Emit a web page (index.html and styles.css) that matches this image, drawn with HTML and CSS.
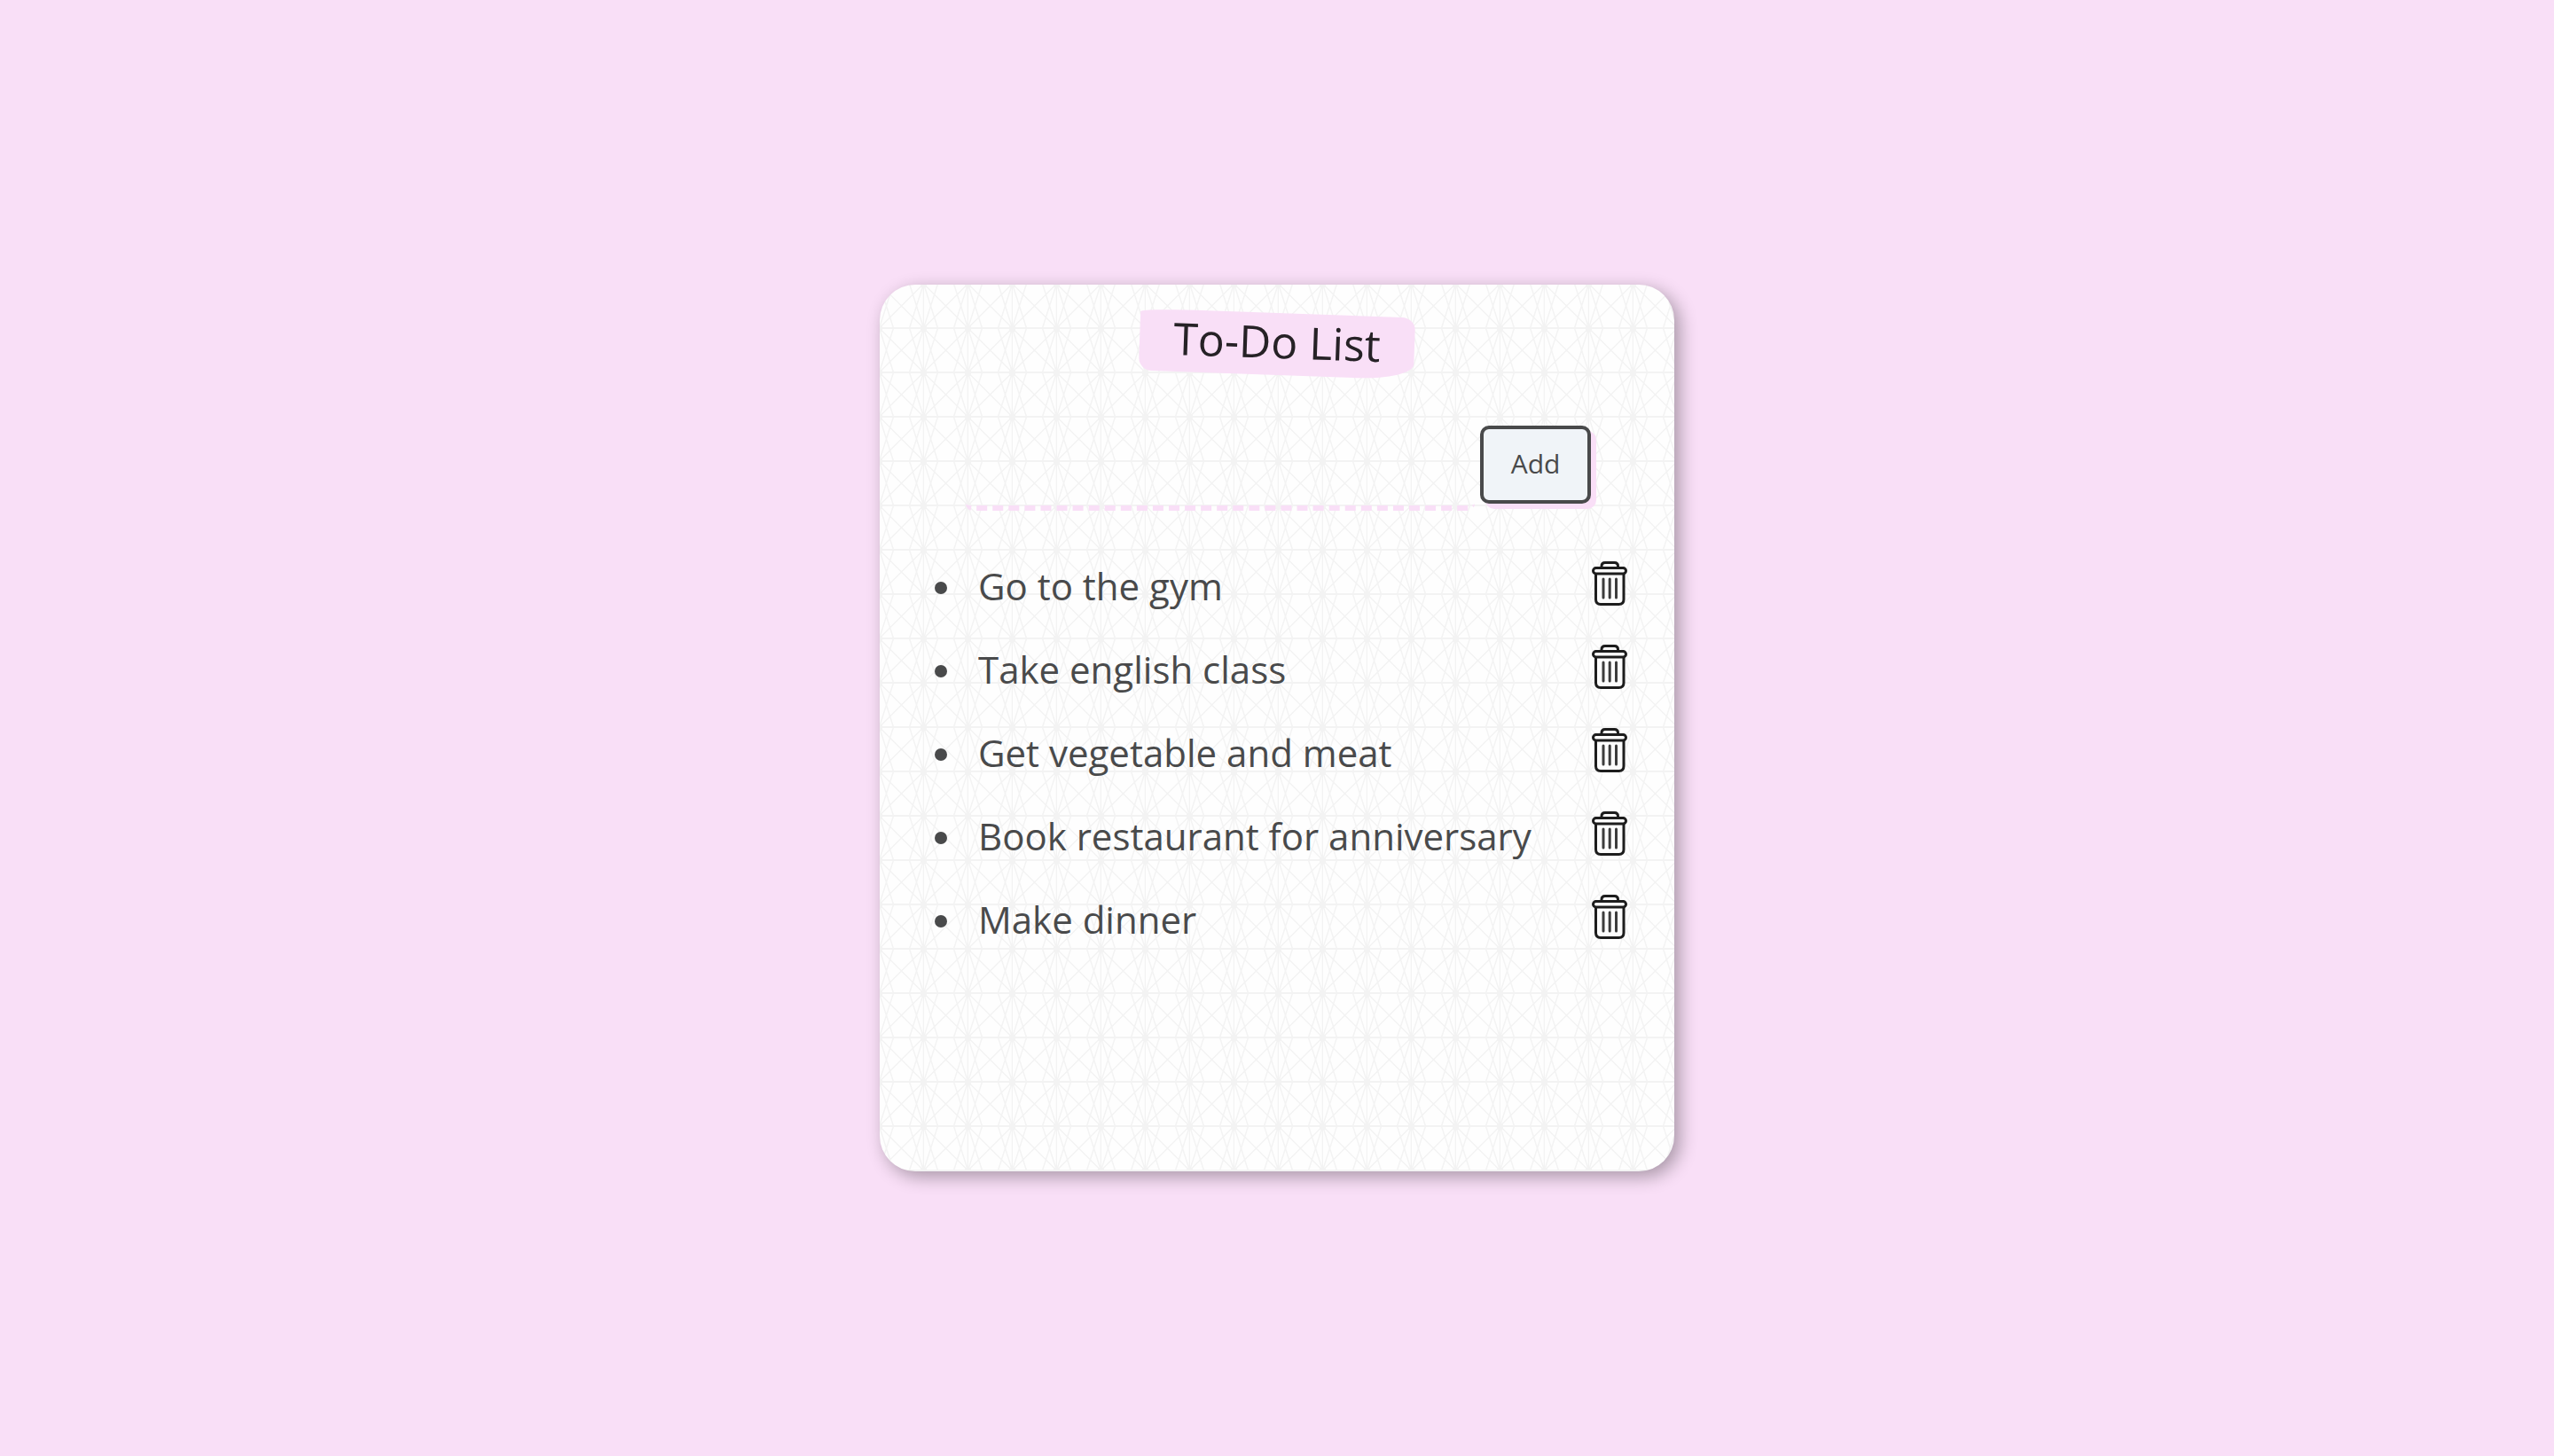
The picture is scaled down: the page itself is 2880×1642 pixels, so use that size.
FILE: index.html
```html
<!DOCTYPE html>
<html lang="en">
<head>
<meta charset="utf-8">
<meta name="viewport" content="width=device-width, initial-scale=1">
<title>To-Do List</title>
<link rel="stylesheet" href="styles.css">
</head>
<body>
<svg width="0" height="0" class="sprite" aria-hidden="true">
  <symbol id="trash" viewBox="0 0 40 50">
    <g fill="#fcfcfc" stroke="#1d1d1d" stroke-width="3" stroke-linejoin="round" stroke-linecap="round">
      <path d="M11 8V5.500Q11 1.500 15 1.500H25.500Q29.500 1.500 29.500 5.500V8"/>
      <path d="M4.500 13.500V43Q4.500 48.500 10 48.500H30.500Q36 48.500 36 43V13.500"/>
      <rect x="1.500" y="7.500" width="37" height="6.500" rx="3.200"/>
      <path d="M13 20V41M20.200 20V41M27.500 20V41" stroke="#3c3c3c"/>
    </g>
  </symbol>
</svg>
<main class="card">
  <h1 class="title">To-Do List</h1>
  <form class="entry">
    <input class="entry-field" type="text" aria-label="New task">
    <button class="entry-add" type="button">Add</button>
  </form>
  <ul class="tasks">
    <li class="task"><span class="task-text">Go to the gym</span><button class="task-delete" type="button" aria-label="Delete"><svg class="icon" aria-hidden="true"><use href="#trash"/></svg></button></li>
    <li class="task"><span class="task-text">Take english class</span><button class="task-delete" type="button" aria-label="Delete"><svg class="icon" aria-hidden="true"><use href="#trash"/></svg></button></li>
    <li class="task"><span class="task-text">Get vegetable and meat</span><button class="task-delete" type="button" aria-label="Delete"><svg class="icon" aria-hidden="true"><use href="#trash"/></svg></button></li>
    <li class="task"><span class="task-text">Book restaurant for anniversary</span><button class="task-delete" type="button" aria-label="Delete"><svg class="icon" aria-hidden="true"><use href="#trash"/></svg></button></li>
    <li class="task"><span class="task-text">Make dinner</span><button class="task-delete" type="button" aria-label="Delete"><svg class="icon" aria-hidden="true"><use href="#trash"/></svg></button></li>
  </ul>
</main>
</body>
</html>
```
FILE: styles.css
```css
* {
  box-sizing: border-box;
}

body {
  margin: 0;
  min-height: 100vh;
  display: flex;
  align-items: center;
  justify-content: center;
  background: #f9dff7;
  color: #494a4b;
  font-family: "Open Sans", sans-serif;
  font-size: 42px;
}

.sprite {
  position: absolute;
}

.card {
  width: 100%;
  max-width: 896px;
  min-height: 1000px;
  padding: 32px 0;
  display: flex;
  flex-direction: column;
  border-radius: 40px;
  background: #fefefe url("data:image/svg+xml,%3Csvg xmlns='http://www.w3.org/2000/svg' width='50' height='50'%3E%3Cg stroke='%23f3f3f3' stroke-width='1.500' fill='none'%3E%3Cpath stroke-width='2' d='M0 49H50'/%3E%3Cpath d='M49.500 0V50M-.5-1L49.500 49M49.500-1L-.5 49M-.5-1L15.500 49M15.500-1L-.5 49M49.500-1L33.500 49M33.500-1L49.500 49'/%3E%3C/g%3E%3Cpath fill='%23f3f3f3' d='M46 46h4v4h-4zM0 46h3v4h-3zM46 0h4v3h-4zM0 0h3v3h-3z'/%3E%3C/svg%3E");
  box-shadow: 6px 6px 20px rgba(0, 0, 0, 0.33);
}

.title {
  width: 310px;
  margin: 0 auto;
  padding-bottom: 6px;
  background: #f9dff7;
  color: #262226;
  border-radius: 20% 5% 20% 5% / 5% 20% 25% 20%;
  font-size: 50px;
  font-weight: 400;
  line-height: 64px;
  text-align: center;
  transform: rotate(2deg);
}

.entry {
  display: flex;
  align-items: center;
  gap: 6px;
  margin-top: 49px;
  padding: 0 94px 0 97px;
}

.entry-field {
  flex: 1;
  min-width: 0;
  height: 104px;
  padding: 0 16px;
  border: 0;
  border-bottom: 6px dashed #f9dff7;
  border-radius: 8px;
  outline: 0;
  background: transparent;
  color: inherit;
  font: inherit;
}

.entry-add {
  width: 125px;
  height: 88px;
  padding: 0 0 4px;
  border: 4px solid #494a4b;
  border-radius: 10px;
  background: #f0f4f8;
  box-shadow: 6px 6px 0 #f9dff7;
  color: inherit;
  font-family: inherit;
  font-size: 30px;
}

.tasks {
  margin: 0;
  padding: 35px 53px 0 62px;
  list-style: none;
}

.task {
  display: flex;
  align-items: center;
  min-height: 94px;
}

.task::before {
  content: "";
  width: 14px;
  height: 14px;
  margin: 10px 35px 0 0;
  border-radius: 50%;
  background: #494a4b;
}

.task-text {
  flex: 1;
  padding-top: 4px;
}

.task-delete {
  width: 40px;
  height: 50px;
  padding: 0;
  border: 0;
  background: none;
}

.icon {
  display: block;
  width: 100%;
  height: 100%;
}
```
